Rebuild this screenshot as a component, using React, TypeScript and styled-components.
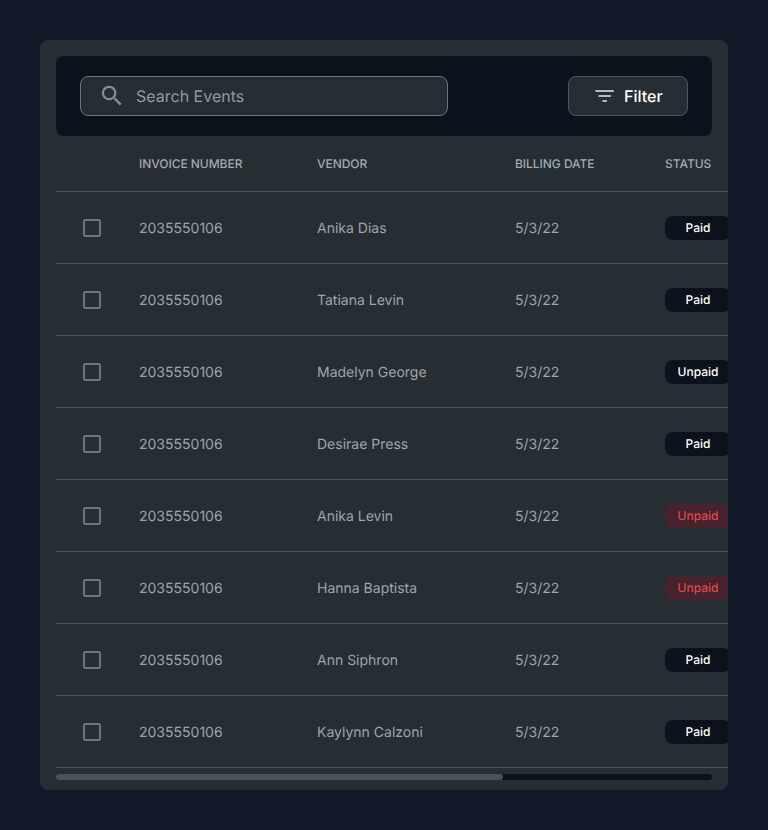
import React from "react";
import styled, { createGlobalStyle } from "styled-components";

const GlobalStyle = createGlobalStyle`
  * { box-sizing: border-box; }
  html, body { margin: 0; background: #111827; }
  body {
    font-family: Inter, "Liberation Sans", sans-serif;
    text-rendering: geometricPrecision;
    overflow: hidden;
  }
`;

const Page = styled.main`
  height: 830px;
  padding: 40px;
  background: #111827;
`;

const Card = styled.section`
  height: 750px;
  padding: 16px 0 0 16px;
  border-radius: 8px;
  background: #262d33;
  overflow: hidden;
`;

const Toolbar = styled.header`
  display: flex;
  align-items: center;
  justify-content: space-between;
  height: 80px;
  margin-right: 16px;
  padding: 0 24px;
  border-radius: 8px;
  background: #0c121c;
`;

const SearchField = styled.label`
  display: flex;
  align-items: center;
  gap: 11px;
  width: 368px;
  height: 40px;
  padding: 0 16px 0 17px;
  border: 1px solid #6b7280;
  border-radius: 8px;
  background: #262d33;
  color: #858d96;
`;

const SearchInput = styled.input`
  flex: 1;
  min-width: 0;
  padding: 0;
  border: 0;
  outline: 0;
  background: transparent;
  color: #9ca3af;
  font: 400 16px/24px Inter, sans-serif;
  text-rendering: geometricPrecision;
  &::placeholder { color: #929aa3; opacity: 1; }
`;

const FilterButton = styled.button`
  display: flex;
  align-items: center;
  justify-content: flex-start;
  gap: 9px;
  width: 120px;
  height: 40px;
  padding: 0 0 0 26px;
  border: 1px solid #4b5560;
  border-radius: 8px;
  background: #262d33;
  color: #fff;
  font: 500 16px/24px Inter, sans-serif;
  text-rendering: geometricPrecision;
  svg { color: #b4bdc7; }
`;

const Table = styled.div`
  width: 100%;
  overflow: hidden;
`;

const Cell = styled.span`
  white-space: nowrap;
`;

const Row = styled.div<{ $head?: boolean }>`
  display: grid;
  grid-template-columns: 83px 178px 198px 150px 66px;
  align-items: center;
  height: ${(p) => (p.$head ? 56 : 72)}px;
  border-bottom: 1px solid #4b5560;
  color: ${(p) => (p.$head ? "#a3aab3" : "#9ea5ae")};
  font-size: ${(p) => (p.$head ? 12 : 14)}px;
  font-weight: ${(p) => (p.$head ? 500 : 400)};
  line-height: 20px;

  ${Cell} {
    padding-top: ${(p) => (p.$head ? 0 : 2)}px;
    letter-spacing: ${(p) => (p.$head ? "-0.04px" : "0")};
  }
`;

const Checkbox = styled.input`
  appearance: none;
  width: 18px;
  height: 18px;
  margin: 1px 0 0 27px;
  border: 2px solid #6d757f;
  border-radius: 3px;
  background: transparent;
`;

const Badge = styled.span<{ $overdue?: boolean }>`
  display: flex;
  align-items: center;
  justify-content: center;
  width: 66px;
  height: 24px;
  margin-top: 1px;
  border-radius: 8px;
  background: ${(p) => (p.$overdue ? "#48222d" : "#0c121c")};
  color: ${(p) => (p.$overdue ? "#dc4a4c" : "#fff")};
  font-size: 12px;
  font-weight: 500;
  line-height: 16px;
`;

const Track = styled.div`
  height: 6px;
  margin: 6px 16px 0 0;
  border-radius: 3px;
  background: #0c121a;
`;

const Thumb = styled.div`
  width: 447px;
  height: 6px;
  border-radius: 3px;
  background: #48525b;
`;

const SearchIcon = () => (
  <svg width="27" height="27" viewBox="-0.4 0.6 24 24" fill="currentColor" aria-hidden="true">
    <path d="M15.5 14h-.79l-.28-.27A6.47 6.47 0 0 0 16 9.5 6.5 6.5 0 1 0 9.5 16c1.61 0 3.09-.59 4.23-1.57l.27.28v.79l5 4.99L20.49 19l-4.99-5zm-6 0C7.01 14 5 11.99 5 9.5S7.01 5 9.5 5 14 7.01 14 9.5 11.99 14 9.5 14z" />
  </svg>
);

const FilterIcon = () => (
  <svg width="20" height="20" viewBox="0 0 20 20" fill="none" stroke="currentColor" strokeWidth="2" strokeLinecap="round" aria-hidden="true">
    <path d="M1.2 5h17M4.2 10h11M8.2 15h3" />
  </svg>
);

type Invoice = { vendor: string; status: string; overdue?: boolean };

const invoices: Invoice[] = [
  { vendor: "Anika Dias", status: "Paid" },
  { vendor: "Tatiana Levin", status: "Paid" },
  { vendor: "Madelyn George", status: "Unpaid" },
  { vendor: "Desirae Press", status: "Paid" },
  { vendor: "Anika Levin", status: "Unpaid", overdue: true },
  { vendor: "Hanna Baptista", status: "Unpaid", overdue: true },
  { vendor: "Ann Siphron", status: "Paid" },
  { vendor: "Kaylynn Calzoni", status: "Paid" },
];

export default function App() {
  return (
    <>
      <GlobalStyle />
      <Page>
        <Card>
          <Toolbar>
            <SearchField>
              <SearchIcon />
              <SearchInput placeholder="Search Events" />
            </SearchField>
            <FilterButton type="button">
              <FilterIcon />
              Filter
            </FilterButton>
          </Toolbar>
          <Table>
            <Row $head>
              <Cell />
              <Cell>INVOICE NUMBER</Cell>
              <Cell>VENDOR</Cell>
              <Cell>BILLING DATE</Cell>
              <Cell>STATUS</Cell>
            </Row>
            {invoices.map((invoice) => (
              <Row key={invoice.vendor}>
                <Checkbox type="checkbox" aria-label={invoice.vendor} />
                <Cell>2035550106</Cell>
                <Cell>{invoice.vendor}</Cell>
                <Cell>5/3/22</Cell>
                <Badge $overdue={invoice.overdue}>{invoice.status}</Badge>
              </Row>
            ))}
          </Table>
          <Track>
            <Thumb />
          </Track>
        </Card>
      </Page>
    </>
  );
}
